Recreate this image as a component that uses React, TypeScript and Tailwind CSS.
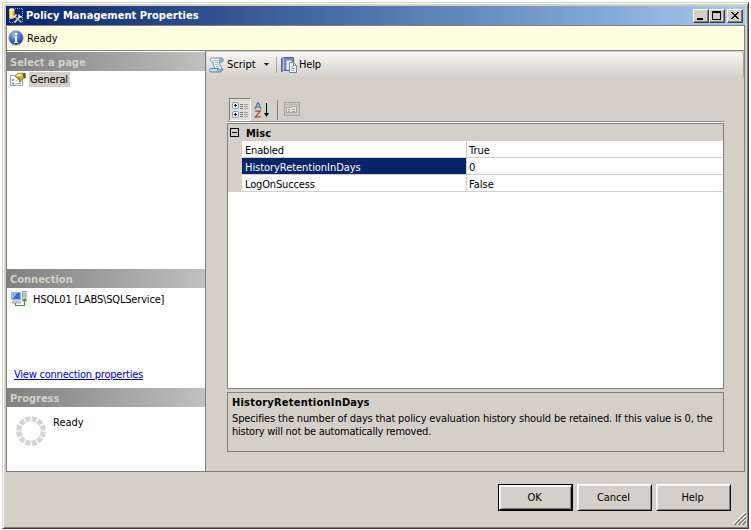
import type { ReactNode } from 'react';

function PaneHeader({ title }: { title: string }) {
  return (
    <div className="flex h-[19px] shrink-0 items-center bg-linear-to-r from-[#808080] to-[#c0c0c0] pt-px pl-[3px] text-[11px] font-bold text-[#d4d0c8]">
      {title}
    </div>
  );
}

function CaptionButton({ children }: { children: ReactNode }) {
  return (
    <div className="h-[14px] w-4 border border-t-white border-l-white border-r-[#404040] border-b-[#404040] bg-[#d4d0c8] shadow-[inset_-1px_-1px_0_#808080]">
      <svg className="block h-3 w-[14px]" viewBox="0 0 14 12" fill="none" stroke="#000" shapeRendering="crispEdges">
        {children}
      </svg>
    </div>
  );
}

function PushButton({ label, primary = false }: { label: string; primary?: boolean }) {
  return (
    <div className={primary ? 'h-[27px] w-[75px] border border-black' : 'h-[27px] w-[75px]'}>
      <div className="flex h-full w-full items-center justify-center border border-t-white border-l-white border-r-[#101010] border-b-[#101010] pr-[2px] tracking-[-0.1px] shadow-[inset_1px_1px_0_#f4f2ee,inset_-1px_-1px_0_#808080]">
        {label}
      </div>
    </div>
  );
}

function PropertyRow({ name, value, selected = false, tracking }: { name: string; value: string; selected?: boolean; tracking: string }) {
  return (
    <div className="flex h-[17px]">
      <div className="w-[14px] bg-[#d4d0c8]" />
      <div
        className={`flex w-[225px] items-center border-r border-b border-[#d4d0c8] pt-[2px] pl-[3px] ${tracking} ${selected ? 'bg-[#0a246a] text-white' : 'bg-white'}`}
      >
        {name}
      </div>
      <div className="flex grow items-center border-b border-[#d4d0c8] bg-white pt-[2px] pl-[2px]">{value}</div>
    </div>
  );
}

function ServerToolsIcon() {
  return (
    <svg className="h-[17px] w-4" viewBox="0 0 16 17" fill="none">
      <path d="M7 1.500h8M14.500 2v13M1.500 12v3.500h5" stroke="#7fb4bd" strokeDasharray="1 1" />
      <path d="M1 3v7.500c0 1.800 5.500 1.800 5.500 0V3z" fill="#e3b43a" />
      <path d="M2 3v8.500c1 .4 2 .3 2.500 0V3z" fill="#fbe9a0" />
      <ellipse cx="3.750" cy="2.700" rx="2.750" ry="1.400" fill="#fff3b4" />
      <path d="M6.500 15.500l6-6.500" stroke="#d8dbe0" strokeWidth="1.800" />
      <path d="M7 9.500l6.500 6" stroke="#aeb4c0" strokeWidth="1.600" />
      <path d="M5.500 10.500l3-3M11 7.500v2.300h3" stroke="#eef0f4" strokeWidth="1.500" />
    </svg>
  );
}

function InfoIcon() {
  return (
    <svg className="h-4 w-4" viewBox="0 0 16 16">
      <defs>
        <radialGradient id="info" cx=".4" cy=".25" r=".8">
          <stop offset="0" stopColor="#a6bdf0" />
          <stop offset=".6" stopColor="#3c5fc0" />
          <stop offset="1" stopColor="#1b348d" />
        </radialGradient>
      </defs>
      <circle cx="8" cy="8" r="7.2" fill="url(#info)" stroke="#8c9cc4" strokeWidth="1" />
      <path d="M7 3h2v2H7zM6 6.300h3V12h1v1H6v-1h1V7.300H6z" fill="#fff" />
    </svg>
  );
}

function PropertyPageIcon() {
  return (
    <svg className="h-[15px] w-4" viewBox="0 0 16 15" fill="none">
      <rect x=".5" y="3.500" width="12" height="10" fill="#fff" stroke="#a0a8b0" />
      <path d="M2 7h2v2H2zM2 10.500h2v2H2z" fill="#8094a8" />
      <path d="M5.500 8.500H7M5.500 11.500H11" stroke="#a9b4bf" />
      <path d="M5 4l2.500-2.500L13 1l2 2v3l-3 .8-1.500 3-1.500-2-2-1.500z" fill="#cdb53c" stroke="#857a30" strokeWidth=".7" />
      <path d="M6.500 3.700l2-1.500 3.500-.3-1.500 2-2 .5z" fill="#fff6a9" />
      <path d="M7.500 5.500l2 1 .5 4" stroke="#6f6a35" />
      <path d="M13 1h2.500v5H13.500z" fill="#4a552c" />
    </svg>
  );
}

function ConnectionIcon() {
  return (
    <svg className="h-4 w-4" viewBox="0 0 16 16" fill="none">
      <rect x=".5" y="1.500" width="9" height="7" fill="#2d6fd3" stroke="#9fb5d0" />
      <path d="M1 2h5L2 8H1z" fill="#80b8f5" />
      <path d="M2 10h7l1 2H1z" fill="#d6dce6" stroke="#7d91ab" strokeWidth=".7" />
      <rect x="11.500" y=".5" width="3.500" height="8" fill="#e0e5ec" stroke="#8898ad" />
      <path d="M12 3h3M12 5h3" stroke="#8a9db7" />
      <path d="M4.500 12v2.500h9V9M11.500 10.500l2-2.500 2 2.500" stroke="#4f9143" strokeWidth="1.200" />
    </svg>
  );
}

function ScriptIcon() {
  return (
    <svg className="h-4 w-4" viewBox="0 0 16 16" fill="none" strokeLinejoin="round">
      <path d="M2.500 1H12c2.500 0 2.800 3.500.5 4h-2c-.5 2.500 2.500 5 2.500 8H6c0-3-2.500-5-2-8C.8 5 .3 1.500 2.500 1z" fill="#edf4fe" stroke="#6582b3" strokeWidth=".9" />
      <path d="M11 1.500c-1 1-.8 2.500-.3 3.500h1.800c2.200-.5 2-3.800-.5-4z" fill="#9db4dc" stroke="#6582b3" strokeWidth=".7" />
      <path d="M1.200 11.500H9c-.7 1.200-.3 3 1 3.500H2C.2 15 .2 12.700 1.200 11.500z" fill="#c9d9f2" stroke="#5876aa" strokeWidth=".9" />
      <path d="M9 11.500c1.800-.2 1.500 2 3 1.500.8-.3 1.200-1.300 1.500-1.200 1 1.500-.7 3.200-3.500 3.200" fill="#a9bee2" stroke="#5876aa" strokeWidth=".9" />
      <path d="M4 3.500h5M5.500 5.500H9M6 7.500h4M7 9.500h4" stroke="#9bb4dc" strokeWidth=".8" />
    </svg>
  );
}

function HelpTopicsIcon() {
  return (
    <svg className="h-4 w-4" viewBox="0 0 16 16" fill="none">
      <path d="M.5 1.500l2-1h10v13h-10l-2 1z" fill="#7a85b8" stroke="#575f94" />
      <path d="M2.500 1v12.500" stroke="#bac4e6" />
      <path d="M5 3h5l2 2v8H5z" fill="#eaf0fc" stroke="#6a7ba6" strokeWidth=".8" />
      <path d="M8.500 5.500h4l3 3v7h-7z" fill="#fff" stroke="#6c7892" strokeWidth=".9" />
      <path d="M12.500 5.500v3h3" stroke="#6c7892" strokeWidth=".9" />
      <path d="M10 9.500h2M10 11.500h4M10 13.500h4" stroke="#a2b0cc" />
    </svg>
  );
}

function CategorizedIcon() {
  return (
    <svg className="h-4 w-4" viewBox="0 0 16 16" fill="none">
      <rect x=".5" y=".5" width="6" height="6" rx="1.500" fill="#fff" stroke="#7b9cbb" />
      <rect x=".5" y="9.500" width="6" height="6" rx="1.500" fill="#fff" stroke="#7b9cbb" />
      <path d="M2 3.500h3M3.500 2v3M2 12.500h3M3.500 11v3" stroke="#000" />
      <path d="M8 2.500h3M8 4.500h3M8 6.500h3M8 10.500h3M8 12.500h3M8 14.500h3" stroke="#77777a" />
      <path d="M12 2.500h4M12 4.500h4M12 6.500h4M12 10.500h4M12 12.500h4M12 14.500h4" stroke="#93a5b5" />
    </svg>
  );
}

function SortIcon() {
  return (
    <svg className="h-4 w-4" viewBox="0 0 16 16" fill="none">
      <path d="M1 7L3.600.8h.8L7 7M2 4.900h4" stroke="#4f78ae" strokeWidth="1.300" />
      <path d="M1.300 9.200h5L1.500 14.800h5.300" stroke="#a8453c" strokeWidth="1.300" />
      <path d="M12.500 1v13" stroke="#000" />
      <path d="M10 11h5l-2.500 4z" fill="#000" />
    </svg>
  );
}

function PropertyPagesIcon() {
  return (
    <svg className="h-[15px] w-4" viewBox="0 0 16 15" fill="none" shapeRendering="crispEdges">
      <rect x=".5" y=".5" width="15" height="13" fill="#cbc8c0" stroke="#aaa7a0" />
      <path d="M1 2.500h14" stroke="#bab7b0" />
      <path d="M2.500 5.500h5l1-1h4v6h-10z" fill="#e4e1da" stroke="#aaa7a0" />
      <path d="M4 7.500h2M8 7.500h3M4 9.500h2M8 9.500h3" stroke="#a4a19a" />
    </svg>
  );
}

const spokes = [0, 30, 60, 90, 120, 150, 180, 210, 240, 270, 300, 330];

function Spinner() {
  return (
    <svg className="h-[30px] w-[30px]" viewBox="-15 -15 30 30">
      {spokes.map((angle) => (
        <path key={angle} d="M-2.200-9.500L-3-14.500Q0-15.300 3-14.500L2.200-9.500Q0-10 -2.200-9.500z" fill="#d5d5d5" transform={`rotate(${angle + 15})`} />
      ))}
    </svg>
  );
}

export default function App() {
  return (
    <div className="h-[530px] w-[751px] overflow-hidden bg-white pt-[2px] pl-[2px] font-['DejaVu_Sans_Condensed','DejaVu_Sans',sans-serif] text-[11px] leading-[13px] text-black [font-stretch:condensed]">
      <div className="relative flex h-[527px] w-[747px] flex-col border border-t-[#d4d0c8] border-l-[#d4d0c8] border-r-[#404040] border-b-[#404040] bg-[#d4d0c8] pt-[3px] pr-[3px] pl-[3px] shadow-[inset_1px_1px_0_#fff,inset_-1px_-1px_0_#808080]">
        <div className="flex h-[19px] shrink-0 items-center bg-linear-to-r from-[#0a246a] to-[#a6caf0] pr-[2px] pl-[2px]">
          <ServerToolsIcon />
          <span className="ml-[2px] whitespace-nowrap font-bold tracking-[0.05px] text-white">Policy Management Properties</span>
          <div className="ml-auto flex">
            <CaptionButton><path d="M3 8.500h6M3 9.500h6" /></CaptionButton>
            <CaptionButton><path d="M2 1.500h9M2 2.500h9M2.500 2v8M10.500 2v8M2 9.500h9" /></CaptionButton>
            <div className="ml-[2px]">
              <CaptionButton><path d="M3 2h2v1h1v1h2V3h1V2h2v1h-1v1H9v1H8v1h1v1h1v1h1v1H9V8H8V7H6v1H5v1H3V8h1V7h1V6h1V5H5V4H4V3H3z" fill="#000" stroke="none" /></CaptionButton>
            </div>
          </div>
        </div>

        <div className="flex h-[447px] shrink-0 flex-col border border-[#808080]">
          <div className="flex h-[25px] shrink-0 items-center border-b border-[#808080] bg-[#ffffe1] pl-px">
            <InfoIcon />
            <span className="ml-[3px]">Ready</span>
          </div>
          <div className="flex min-h-0 grow">
            <aside className="flex w-[199px] shrink-0 flex-col border-r border-[#808080] bg-white pt-px">
              <PaneHeader title="Select a page" />
              <div className="flex h-[198px] shrink-0 items-start pt-px pl-[3px]">
                <PropertyPageIcon />
                <span className="ml-[3px] h-[15px] w-[41px] bg-[#d4d0c8] pt-px pl-px tracking-[-0.15px]">General</span>
              </div>
              <PaneHeader title="Connection" />
              <div className="flex h-[100px] shrink-0 flex-col pt-[3px] pl-1">
                <div className="flex items-start">
                  <ConnectionIcon />
                  <span className="mt-[2px] ml-[6px] whitespace-nowrap tracking-[-0.17px]">HSQL01 [LABS\SQLService]</span>
                </div>
                <span className="mt-auto mb-[7px] ml-[3px] self-start whitespace-nowrap tracking-[-0.22px] text-[#0000d8] underline underline-offset-1">View connection properties</span>
              </div>
              <PaneHeader title="Progress" />
              <div className="flex pt-[9px] pl-[9px]">
                <Spinner />
                <span className="ml-[7px]">Ready</span>
              </div>
            </aside>

            <main className="flex grow flex-col pt-px">
              <div className="ml-px flex h-[26px] shrink-0 items-center rounded-r-[3px] border-r border-[#aaa7a0] bg-linear-to-b from-[#f7f6f4] to-[#d4d0c8] pb-px pl-[2px]">
                <ScriptIcon />
                <span className="ml-[2px] w-[37px]">Script</span>
                <svg className="h-[3px] w-[5px]" viewBox="0 0 5 3"><path d="M0 0h5L2.500 3z" /></svg>
                <div className="ml-[7px] h-4 w-px bg-[#a5a29b]" />
                <div className="ml-1"><HelpTopicsIcon /></div>
                <span className="ml-[2px] tracking-[-0.2px]">Help</span>
              </div>

              <div className="mt-[20px] ml-[21px] w-[497px]">
                <div className="flex h-[23px] items-start">
                  <div className="ml-[2px] flex h-[23px] w-[22px] items-center justify-center border border-t-[#808080] border-l-[#808080] border-r-white border-b-white bg-[#e2dfd9]">
                    <CategorizedIcon />
                  </div>
                  <div className="mt-1 ml-[3px]"><SortIcon /></div>
                  <div className="mt-[2px] ml-[7px] h-[20px] w-px bg-[#808080]" />
                  <div className="mt-1 ml-[6px]"><PropertyPagesIcon /></div>
                </div>
                <div className="h-px bg-[#908d87]" />
                <div className="h-px bg-white" />
                <div className="h-[266px] border border-[#808080] bg-white">
                  <div className="flex h-[17px] items-center bg-[#d4d0c8] pl-[2px]">
                    <svg className="h-[9px] w-[9px]" viewBox="0 0 9 9" fill="none" stroke="#000" shapeRendering="crispEdges">
                      <rect x=".5" y=".5" width="8" height="8" /><path d="M2 4.500h5" />
                    </svg>
                    <span className="ml-[7px] pt-[2px] font-bold">Misc</span>
                  </div>
                  <PropertyRow name="Enabled" value="True" tracking="tracking-[-0.18px]" />
                  <PropertyRow name="HistoryRetentionInDays" value="0" selected tracking="tracking-[-0.05px]" />
                  <PropertyRow name="LogOnSuccess" value="False" tracking="tracking-[-0.15px]" />
                </div>
                <div className="mt-[3px] h-[60px] border border-[#808080] pt-[3px] pl-1 whitespace-nowrap">
                  <div className="font-bold tracking-[0.22px]">HistoryRetentionInDays</div>
                  <div className="mt-[3px] tracking-[-0.145px]">Specifies the number of days that policy evaluation history should be retained. If this value is 0, the</div>
                  <div className="tracking-[-0.24px]">history will not be automatically removed.</div>
                </div>
              </div>
            </main>
          </div>
        </div>

        <div className="mt-3 ml-[492px] flex gap-1">
          <PushButton label="OK" primary />
          <PushButton label="Cancel" />
          <PushButton label="Help" />
        </div>
        <svg className="absolute right-[2px] bottom-[3px] h-[13px] w-[13px]" viewBox="0 0 13 13" fill="none">
          <path d="M0 12L12 0M4 12l8-8M8 12l4-4" stroke="#fff" />
          <path d="M1 13L13 1M2 13L13 2M5 13l8-8M6 13l7-7M9 13l4-4M10 13l3-3" stroke="#808080" />
        </svg>
      </div>
    </div>
  );
}
